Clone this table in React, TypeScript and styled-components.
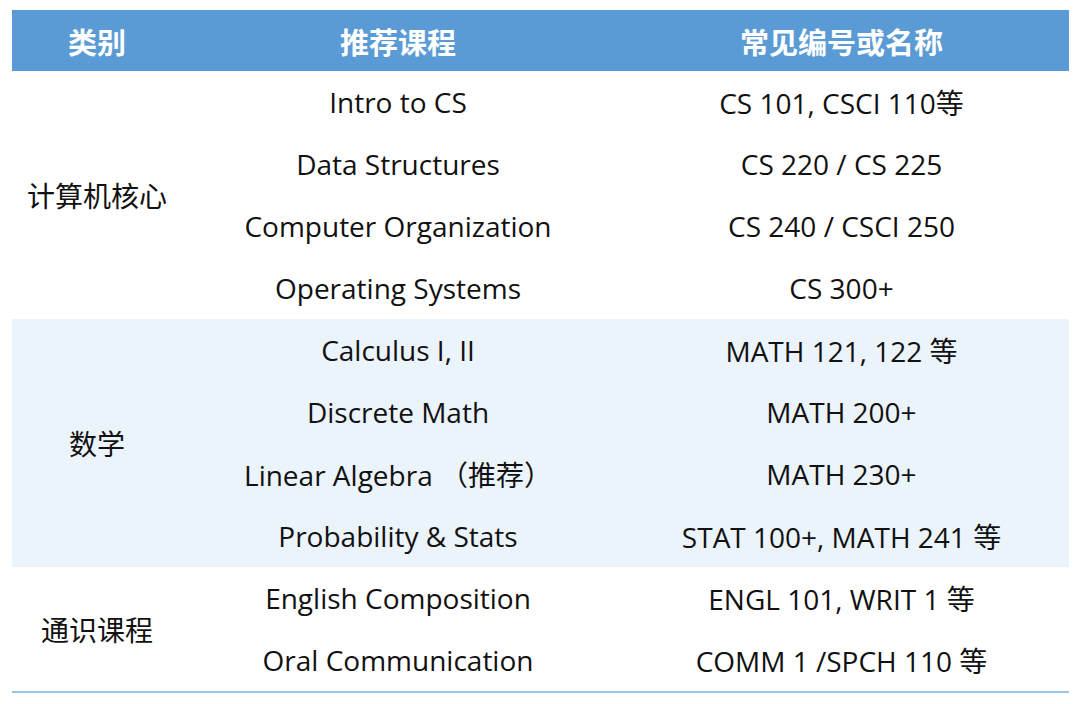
import React from 'react'
import styled, { createGlobalStyle } from 'styled-components'

const GlobalStyle = createGlobalStyle`
  body {
    margin: 0;
    background: #ffffff;
    font-family: "Open Sans", "Noto Sans CJK SC", sans-serif;
  }
`

const groups = [
  {
    name: '计算机核心',
    shaded: false,
    rows: [
      ['Intro to CS', 'CS 101, CSCI 110等'],
      ['Data Structures', 'CS 220 / CS 225'],
      ['Computer Organization', 'CS 240 / CSCI 250'],
      ['Operating Systems', 'CS 300+'],
    ],
  },
  {
    name: '数学',
    shaded: true,
    rows: [
      ['Calculus I, II', 'MATH 121, 122 等'],
      ['Discrete Math', 'MATH 200+'],
      ['Linear Algebra （推荐）', 'MATH 230+'],
      ['Probability & Stats', 'STAT 100+, MATH 241 等'],
    ],
  },
  {
    name: '通识课程',
    shaded: false,
    rows: [
      ['English Composition', 'ENGL 101, WRIT 1 等'],
      ['Oral Communication', 'COMM 1 /SPCH 110 等'],
    ],
  },
]

const App = () => (
  <Page>
    <GlobalStyle />
    <Table>
      <colgroup>
        <col style={{ width: 170 }} />
        <col style={{ width: 432 }} />
        <col />
      </colgroup>
      <thead>
        <tr>
          <HeadCell>类别</HeadCell>
          <HeadCell>推荐课程</HeadCell>
          <HeadCell>常见编号或名称</HeadCell>
        </tr>
      </thead>
      {groups.map((group, gi) => (
        <Group key={gi} $shaded={group.shaded} $last={gi === groups.length - 1}>
          {group.rows.map((row, ri) => (
            <tr key={ri}>
              {ri === 0 && <Cell rowSpan={group.rows.length}>{group.name}</Cell>}
              <Cell>{row[0]}</Cell>
              <Cell>{row[1]}</Cell>
            </tr>
          ))}
        </Group>
      ))}
    </Table>
  </Page>
)

const Page = styled.div`
  padding: 10px 11px 0 12px;
`

const Table = styled.table`
  width: 1057px;
  border-collapse: collapse;
  table-layout: fixed;
`

const HeadCell = styled.th`
  height: 61px;
  padding: 0;
  background: #5b9bd5;
  color: #ffffff;
  font-size: 29px;
  font-weight: 700;
  text-align: center;
  vertical-align: middle;
`

const Group = styled.tbody<{ $shaded: boolean; $last: boolean }>`
  background: ${({ $shaded }) => ($shaded ? '#ebf3fb' : '#ffffff')};
  border-bottom: ${({ $last }) => ($last ? '2px solid #9dc3e6' : 'none')};
`

const Cell = styled.td`
  height: 62px;
  padding: 0;
  color: #111111;
  font-size: 28px;
  text-align: center;
  vertical-align: middle;
  white-space: nowrap;
`

export default App
